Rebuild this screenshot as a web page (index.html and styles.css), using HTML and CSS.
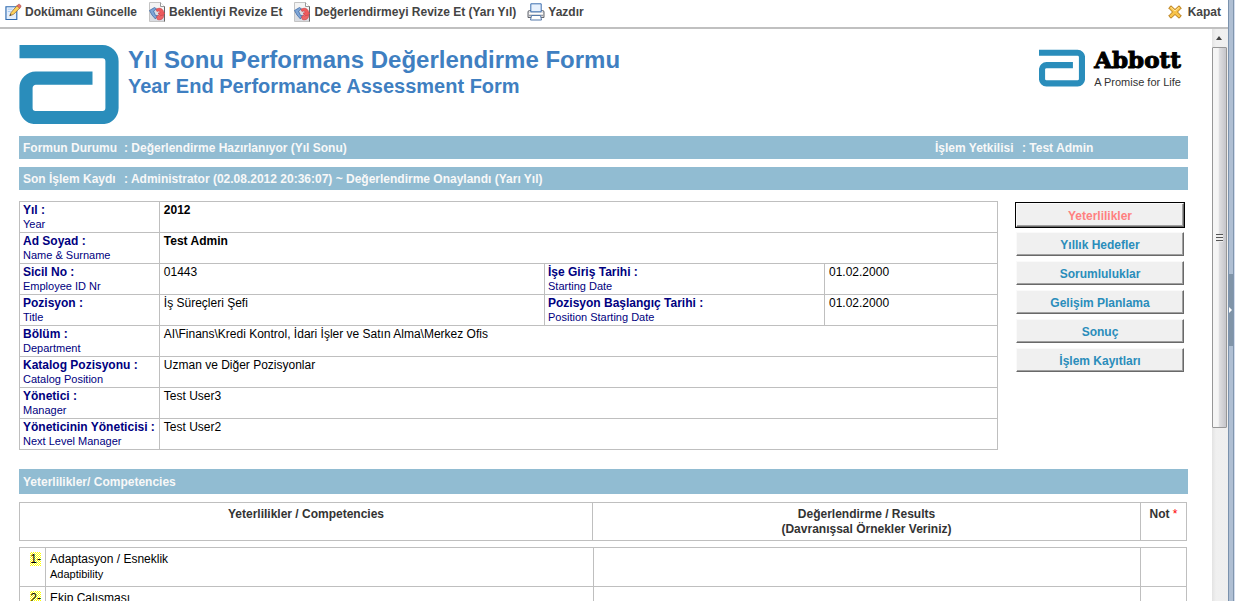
FILE: index.html
```html
<!DOCTYPE html>
<html lang="tr">
<head>
<meta charset="utf-8">
<title>Yıl Sonu Performans Değerlendirme Formu</title>
<link rel="stylesheet" href="styles.css">
</head>
<body>
<svg class="defs" aria-hidden="true">
  <defs>
    <symbol id="logo" viewBox="0 0 99 79">
      <path d="M0 6.7H83a9.5 9.5 0 0 1 9.500 9.500V63a9.500 9.500 0 0 1-9.500 9.500H16A9.500 9.500 0 0 1 6.500 63V43A9.800 9.800 0 0 1 16.500 33.200H73" fill="none" stroke="#2a8dbb" stroke-width="13.200"/>
    </symbol>
    <symbol id="revise" viewBox="0 0 18 20">
      <path d="M1.500 .5H12.500L16.500 4.500V19.500H1.500Z" fill="#f4f4f4" stroke="#c4c4c4"/>
      <path d="M12.500 .5V4.500H16.500" fill="#fff" stroke="#999"/>
      <path d="M16.500 4.500V19.500" stroke="#666"/>
      <path d="M2 19V8L8 5.500L16 9V19Z" fill="#d9dce2"/>
      <path d="M1.500 8.500L4 13L7.500 17L9.500 13.500L7.500 13.500L5.500 9L8.500 7L6.500 5.500Z" fill="#7da5d6" stroke="#416ca8" stroke-width=".8"/>
      <path d="M8 7.500C12 4.500 16 7.500 15.500 11L17 11L13.500 14.500L10 11H12C12 9 10.500 8.500 9 9.500Z" fill="#ee5b5c" stroke="#d2444a" stroke-width=".7"/>
      <path d="M8.500 15L11 12.500V14L15.500 13C16 16.500 13 18.500 9.500 17.500Z" fill="#ed6768" stroke="#d2444a" stroke-width=".7"/>
    </symbol>
  </defs>
</svg>
<div class="app">
  <main class="pane">
    <div class="toolbar">
      <button class="tool" type="button">
        <svg class="icon-edit" viewBox="0 0 18 18" aria-hidden="true">
          <path d="M1 3.500H12.500V17H1Z" fill="#e4effc" stroke="#2c68ae" stroke-width="1.200"/>
          <path d="M3 6H8M3 8.500H6" stroke="#a5c9f0"/>
          <path d="M5 13L6.500 9.500L13 2L16 4.500L9 11.500Z" fill="#ffd35a" stroke="#8c6331" stroke-width=".8"/>
          <path d="M12.500 2.500L14 1Q15 .3 16.300 1.500T16.500 4L15.500 5Z" fill="#e8716a" stroke="#a34b3f" stroke-width=".6"/>
          <path d="M5 13L5.700 11.200L6.800 12.200Z" fill="#333"/>
        </svg>Dokümanı Güncelle</button>
      <button class="tool" type="button"><svg class="icon-revise" aria-hidden="true"><use href="#revise"/></svg>Beklentiyi Revize Et</button>
      <button class="tool" type="button"><svg class="icon-revise" aria-hidden="true"><use href="#revise"/></svg>Değerlendirmeyi Revize Et (Yarı Yıl)</button>
      <button class="tool" type="button">
        <svg class="icon-print" viewBox="0 0 18 18" aria-hidden="true">
          <path d="M1 9Q1 7.500 2.500 7.500H15.500Q17 7.500 17 9V14.500H1Z" fill="#dcdde0" stroke="#62666e"/>
          <path d="M3.800 .8H14.200V8.800H3.800Z" fill="#e7f1fd" stroke="#3d6fb0"/>
          <path d="M2 10.500H16" stroke="#fff"/>
          <path d="M2 12.500H16" stroke="#999ca3"/>
          <path d="M4.500 12.500H13.500L14.500 17H3.500Z" fill="#fff" stroke="#5479aa"/>
        </svg>Yazdır</button>
      <button class="tool tool-close" type="button">
        <svg class="icon-close" viewBox="0 0 14 14" aria-hidden="true">
          <path d="M3 .8L7 4.500L11 .8L13.300 3L9.500 7L13.300 11L11 13.200L7 9.500L3 13.200L.7 11L4.500 7L.7 3Z" fill="#f8c348" stroke="#b57a18" stroke-linejoin="round"/>
          <path d="M3 2.500L7 6L11 2.500" fill="none" stroke="#ffe7a0"/>
        </svg>Kapat</button>
    </div>
    <div class="viewport">
      <div class="form">
        <header class="head">
          <svg class="logo-big" aria-hidden="true"><use href="#logo"/></svg>
          <div class="titles">
            <h1>Yıl Sonu Performans Değerlendirme Formu</h1>
            <h2>Year End Performance Assessment Form</h2>
          </div>
          <div class="brand">
            <svg class="logo-small" aria-hidden="true"><use href="#logo"/></svg>
            <div><div class="brand-name">Abbott</div><div class="brand-line">A Promise for Life</div></div>
          </div>
        </header>
        <div class="bar">
          <span class="bar-key">Formun Durumu</span><span>: Değerlendirme Hazırlanıyor (Yıl Sonu)</span>
          <span class="bar-user">İşlem Yetkilisi</span><span class="bar-user-name">: Test Admin</span>
        </div>
        <div class="bar"><span class="bar-key">Son İşlem Kaydı</span><span>: Administrator (02.08.2012 20:36:07) ~ Değerlendirme Onaylandı (Yarı Yıl)</span></div>
        <div class="details">
          <table class="info">
            <colgroup><col class="c-label"><col><col class="c-label2"><col class="c-date"></colgroup>
            <tr><th scope="row">Yıl :<small>Year</small></th><td colspan="3"><b>2012</b></td></tr>
            <tr><th scope="row">Ad Soyad :<small>Name &amp; Surname</small></th><td colspan="3"><b>Test Admin</b></td></tr>
            <tr><th scope="row">Sicil No :<small>Employee ID Nr</small></th><td>01443</td><th scope="row">İşe Giriş Tarihi :<small>Starting Date</small></th><td>01.02.2000</td></tr>
            <tr><th scope="row">Pozisyon :<small>Title</small></th><td>İş Süreçleri Şefi</td><th scope="row">Pozisyon Başlangıç Tarihi :<small>Position Starting Date</small></th><td>01.02.2000</td></tr>
            <tr><th scope="row">Bölüm :<small>Department</small></th><td colspan="3">AI\Finans\Kredi Kontrol, İdari İşler ve Satın Alma\Merkez Ofis</td></tr>
            <tr><th scope="row">Katalog Pozisyonu :<small>Catalog Position</small></th><td colspan="3">Uzman ve Diğer Pozisyonlar</td></tr>
            <tr><th scope="row">Yönetici :<small>Manager</small></th><td colspan="3">Test User3</td></tr>
            <tr><th scope="row">Yöneticinin Yöneticisi :<small>Next Level Manager</small></th><td colspan="3">Test User2</td></tr>
          </table>
          <nav class="tabs">
            <button class="tab tab-active" type="button">Yeterlilikler</button>
            <button class="tab" type="button">Yıllık Hedefler</button>
            <button class="tab" type="button">Sorumluluklar</button>
            <button class="tab" type="button">Gelişim Planlama</button>
            <button class="tab" type="button">Sonuç</button>
            <button class="tab" type="button">İşlem Kayıtları</button>
          </nav>
        </div>
        <div class="bar bar-section">Yeterlilikler/ Competencies</div>
        <table class="grid grid-head">
          <colgroup><col><col class="c-result"><col class="c-score"></colgroup>
          <tr><th scope="col">Yeterlilikler / Competencies</th><th scope="col">Değerlendirme / Results<br>(Davranışsal Örnekler Veriniz)</th><th scope="col">Not <span class="req">*</span></th></tr>
        </table>
        <table class="grid">
          <colgroup><col class="c-num"><col><col class="c-result-body"><col class="c-score"></colgroup>
          <tr><td class="num"><mark>1-</mark></td><td>Adaptasyon / Esneklik<small>Adaptibility</small></td><td></td><td></td></tr>
          <tr><td class="num"><mark>2-</mark></td><td>Ekip Çalışması</td><td></td><td></td></tr>
        </table>
      </div>
      <div class="scroll" aria-hidden="true">
        <div class="scroll-up"></div>
        <div class="scroll-thumb"><div class="scroll-grip"></div></div>
      </div>
    </div>
  </main>
  <div class="splitter" aria-hidden="true"><div class="splitter-grip"><div class="splitter-arrow"></div></div></div>
</div>
</body>
</html>
```
FILE: styles.css
```css
* { box-sizing: border-box; }

body {
  margin: 0;
  font: 12px/15px "Liberation Sans", Arial, sans-serif;
  color: #000;
  background: #fff;
}

button { font: inherit; cursor: pointer; }
small { display: block; font-size: 11px; line-height: 12px; font-weight: normal; }
.defs { position: absolute; width: 0; height: 0; }

.app { display: flex; height: 100vh; overflow: hidden; }
.pane { flex: 1; min-width: 0; display: flex; flex-direction: column; }

.toolbar {
  display: flex;
  flex: none;
  gap: 11px;
  height: 29px;
  padding: 0 7px 0 5px;
  border-bottom: 2px solid #c0c0c0;
}
.tool {
  display: flex;
  align-items: center;
  gap: 3px;
  height: 24px;
  padding: 0;
  border: 0;
  background: none;
  color: #444;
  font-weight: bold;
  white-space: nowrap;
}
.tool-close { margin-left: auto; gap: 6px; }
.icon-edit { width: 17px; height: 18px; }
.icon-revise { width: 18px; height: 20px; }
.icon-print { width: 18px; height: 18px; }
.icon-close { width: 14px; height: 14px; }

.viewport { flex: 1; display: flex; min-height: 0; }
.form { flex: 1; min-width: 0; padding: 16px 24px 0 19px; overflow: hidden; }

.head { display: flex; align-items: flex-start; margin-bottom: 12px; }
.logo-big { width: 100px; height: 79px; }
.titles { padding-left: 9px; color: #3f7fc1; }
h1, h2 { margin: 0; white-space: nowrap; }
h1 { font-size: 24px; line-height: 30px; }
h2 { font-size: 20px; line-height: 22px; }
.brand { display: flex; gap: 9px; margin-left: auto; padding: 4px 7px 0 0; }
.logo-small { width: 46px; height: 38px; }
.brand-name { font: bold 23px/22px "DejaVu Serif", serif; -webkit-text-stroke: 1px #000; }
.brand-line { padding-top: 2px; font-size: 11px; line-height: 18px; color: #333; white-space: nowrap; }

.bar {
  display: flex;
  align-items: center;
  height: 23px;
  margin-bottom: 8px;
  padding: 2px 4px 0;
  background: #91bcd2;
  color: #f8f8f8;
  font-weight: bold;
  white-space: nowrap;
}
.bar-key { width: 101px; }
.bar-user { margin-left: auto; width: 87px; }
.bar-user-name { width: 162px; }
.bar-section { height: 25px; }

.details { display: flex; align-items: flex-start; gap: 17px; padding: 3px 3px 0 0; margin-bottom: 19px; }

table { border-collapse: collapse; table-layout: fixed; }
th, td { border: 1px solid #bfbfbf; vertical-align: top; text-align: left; }
.info { flex: 1; }
.info th, .info td { height: 31px; padding: 1px 4px 0; white-space: nowrap; }
.info th { color: #000080; padding-left: 3px; }
.c-label { width: 138px; }
.c-label2 { width: 280px; }
.c-date { width: 173px; }

.tabs { display: flex; flex-direction: column; gap: 5px; width: 170px; padding: 2px 1px 0; }
.tab {
  height: 24px;
  padding: 2px 0 0;
  border: 1px solid;
  border-color: #fafafa #696969 #696969 #fafafa;
  background: #f0f0f0;
  box-shadow: inset -1px -1px #a0a0a0;
  color: #2a8dbb;
  font-weight: bold;
}
.tab-active { color: #ff8080; outline: 1px solid #000; }

.grid { width: calc(100% - 1px); }
.grid-head { margin-bottom: 6px; }
.grid th { height: 38px; padding: 4px 3px 3px; text-align: center; color: #333; }
.grid td { height: 39px; padding: 4px 4px 3px; }
.grid small { line-height: 14px; }
.grid .num { text-align: right; }
.c-result { width: 548px; }
.c-result-body { width: 547px; }
.c-score { width: 46px; }
.c-num { width: 26px; }
.req { color: #f00; font-weight: normal; }
mark { display: inline-block; width: 11px; height: 14px; color: #000; background: repeating-conic-gradient(#ff0 0 25%, #fff 0 50%) 0 0 / 2px 2px; }

.scroll {
  display: flex;
  flex-direction: column;
  width: 16px;
  background: linear-gradient(to right, #e3e3e3, #f0f0f0 4px, #efefef);
}
.scroll-up { height: 18px; padding: 7px 4px; }
.scroll-up::before {
  content: "";
  display: block;
  width: 0;
  border: 3px solid transparent;
  border-top: 0;
  border-bottom: 4px solid #444;
}
.scroll-thumb {
  display: flex;
  align-items: center;
  justify-content: center;
  height: 381px;
  width: 15px;
  border: 1px solid #979797;
  border-radius: 1px;
  background: linear-gradient(to right, #f5f5f5 40%, #dedee0 50%, #c5c5ca);
}
.scroll-grip { width: 7px; height: 8px; background: repeating-linear-gradient(#555 0 1px, #eee 1px 3px); }

.splitter {
  display: flex;
  align-items: center;
  width: 7px;
  padding-top: 19px;
  border-left: 1px solid #7b92ad;
  border-right: 1px solid #d3dced;
  background: linear-gradient(to right, #afbfd3 4px, #8095ad 4px);
}
.splitter-grip { display: flex; align-items: center; width: 4px; height: 72px; background: #8094a8; }
.splitter-arrow { border: 3px solid transparent; border-left-color: #fff; border-right: 0; }
```
